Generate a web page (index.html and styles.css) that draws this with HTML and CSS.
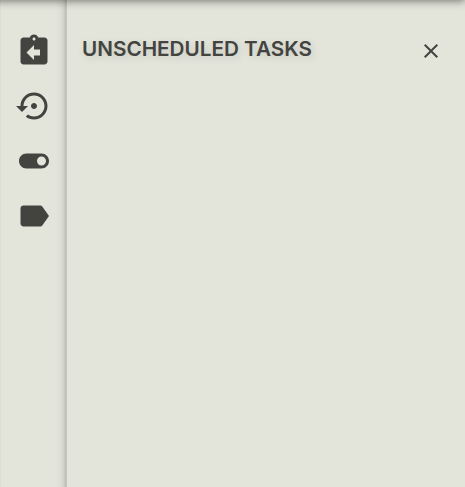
FILE: index.html
```
<!DOCTYPE html>
<html lang="en">
<head>
<meta charset="utf-8">
<title>Unscheduled tasks</title>
<link rel="stylesheet" href="styles.css">
</head>
<body>
<div class="app">
  <nav class="rail">
    <svg viewBox="0 0 24 24"><path d="M19 3h-4.180C14.400 1.840 13.300 1 12 1s-2.400.840-2.820 2H5c-1.100 0-2 .900-2 2v14c0 1.100.900 2 2 2h14c1.100 0 2-.900 2-2V5c0-1.100-.900-2-2-2zm-7 0c.550 0 1 .450 1 1s-.450 1-1 1-1-.450-1-1 .450-1 1-1zm4 12h-4v3l-5-5 5-5v3h4v4z"/></svg>
    <svg viewBox="0 0 24 24"><path d="M14 12c0-1.100-.900-2-2-2s-2 .900-2 2 .900 2 2 2 2-.900 2-2zm-2-9c-4.970 0-9 4.030-9 9H0l4 4 4-4H5c0-3.870 3.130-7 7-7s7 3.130 7 7-3.130 7-7 7c-1.510 0-2.910-.490-4.060-1.300l-1.420 1.440C8.040 20.300 9.940 21 12 21c4.970 0 9-4.030 9-9s-4.030-9-9-9z"/></svg>
    <svg viewBox="0 0 24 24"><path d="M17 7H7c-2.760 0-5 2.240-5 5s2.240 5 5 5h10c2.760 0 5-2.240 5-5s-2.240-5-5-5zm0 8c-1.660 0-3-1.340-3-3s1.340-3 3-3 3 1.340 3 3-1.340 3-3 3z"/></svg>
    <svg viewBox="0 0 24 24"><path d="M17.630 5.840C17.270 5.330 16.670 5 16 5L5 5.010C3.900 5.010 3 5.900 3 7v10c0 1.100.900 1.990 2 1.990L16 19c.670 0 1.270-.330 1.630-.840L22 12l-4.370-6.160z"/></svg>
  </nav>
  <main class="panel">
    <header class="head">
      <h1>UNSCHEDULED TASKS</h1>
      <svg class="close" viewBox="0 0 24 24"><path d="M19 6.410 17.590 5 12 10.590 6.410 5 5 6.410 10.590 12 5 17.590 6.410 19 12 13.410 17.590 19 19 17.590 13.410 12z"/></svg>
    </header>
  </main>
</div>
</body>
</html>
```
FILE: styles.css
```
* { box-sizing: border-box; }
body { margin: 0; background: #e3e5db; color: #434440; font-family: Inter, sans-serif; overflow: hidden; }
.app { display: flex; height: 100vh; position: relative; }
.app::before {
  content: "";
  position: absolute;
  inset: -11px 1px auto -10px;
  height: 10px;
  box-shadow: 0 1px 9px 1px rgba(0, 0, 0, .5);
}
.rail {
  width: 66px;
  padding: 33px 0 0 15px;
  display: flex;
  flex-direction: column;
  gap: 19px;
  border-left: 1px solid #dcdfd8;
  background: linear-gradient(to left, #babcb4 0, #cfd1c8 2px, #dcded5 5px, #e3e5db 10px);
}
.rail svg { width: 36px; height: 36px; flex: none; fill: #434440; }
.panel { flex: 1; border-left: 1px solid #c4c6be; padding: 35px 22px 0 15px; }
.head { display: flex; justify-content: space-between; align-items: flex-start; }
h1 {
  margin: 0;
  font-size: 20.7px;
  line-height: 28px;
  font-weight: 600;
  white-space: nowrap;
  text-shadow: 2px 2px 8px rgba(0, 0, 0, .14);
}
.close { width: 24px; height: 24px; margin-top: 4px; fill: #434440; }
```
